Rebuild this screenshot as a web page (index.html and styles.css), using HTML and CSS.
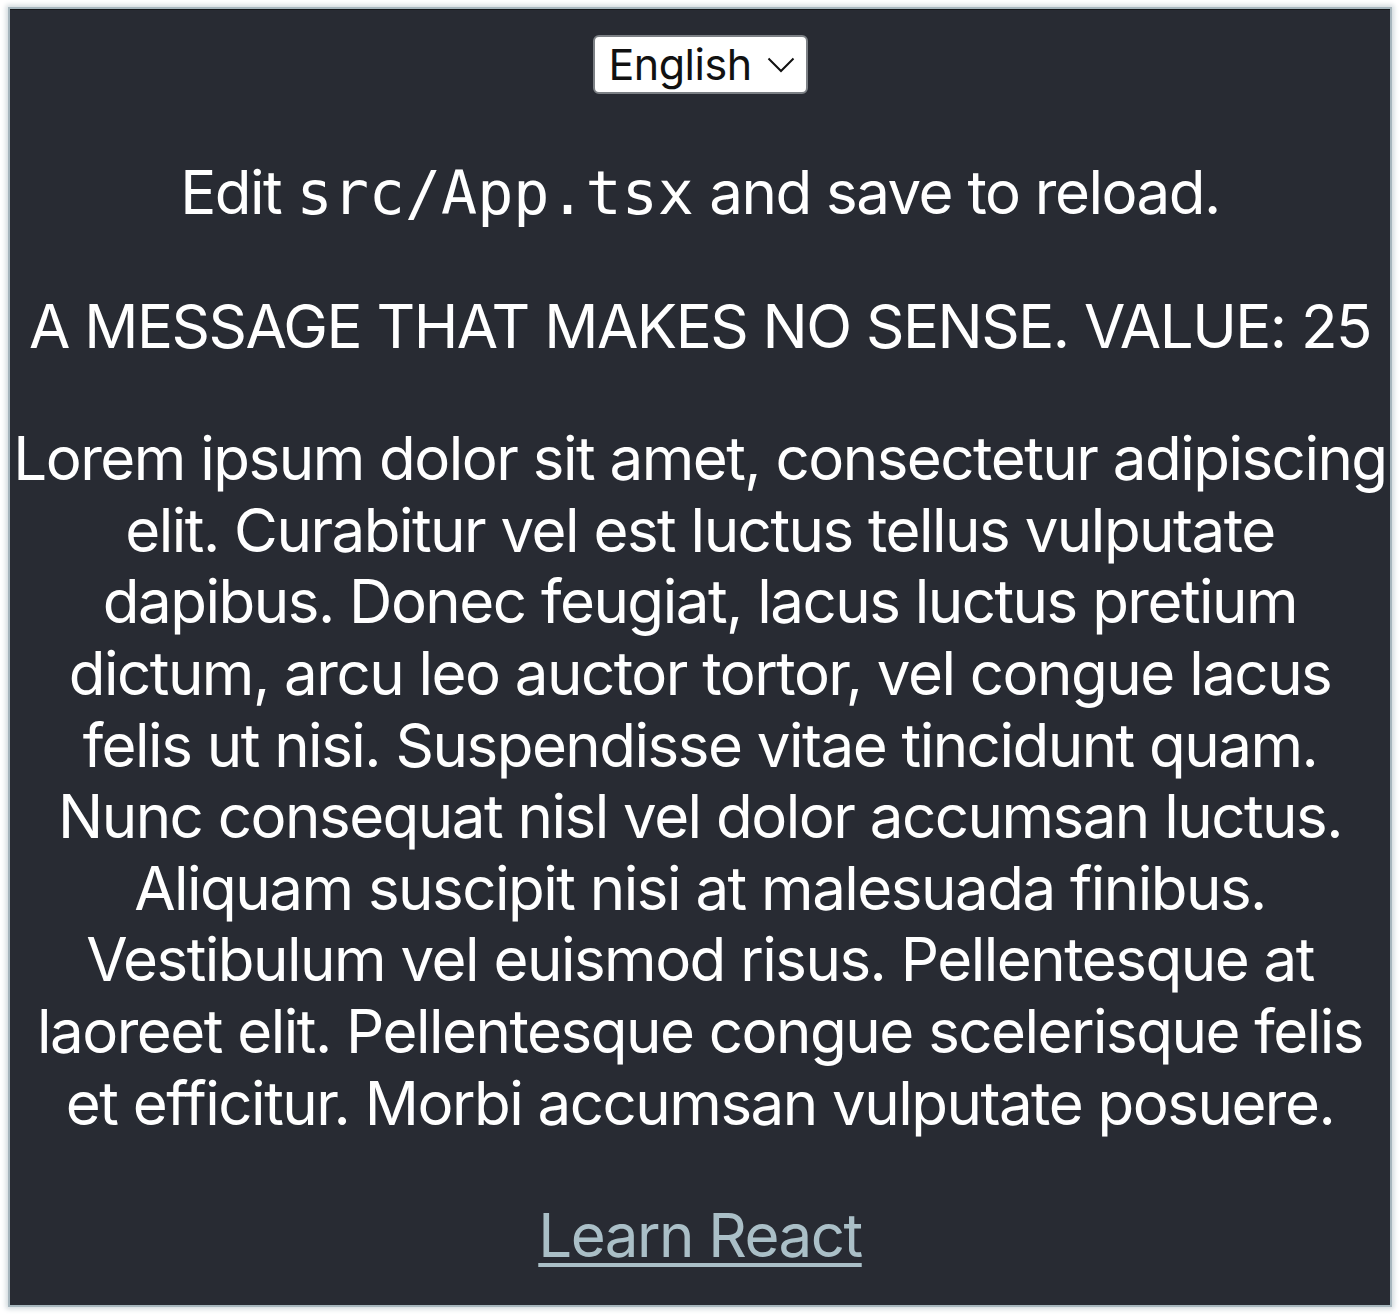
FILE: index.html
```html
<!DOCTYPE html>
<html lang="en">
<head>
<meta charset="utf-8">
<title>React App</title>
<link rel="stylesheet" href="styles.css">
</head>
<body>
<div class="frame">
  <header class="app-header">
    <div class="lang-select">
      <select class="lang" aria-label="Language">
        <option>English</option>
        <option>Français</option>
      </select>
      <svg class="chev" width="28" height="16" viewBox="0 0 28 16" aria-hidden="true"><path d="M1.5 1.5 L14 14 L26.5 1.5" fill="none" stroke="#111" stroke-width="2"/></svg>
    </div>
    <p class="line first">Edit <code>src/App.tsx</code> and save to reload.</p>
    <p class="line">A MESSAGE THAT MAKES NO SENSE. VALUE: 25</p>
    <p class="line">Lorem ipsum dolor sit amet, consectetur adipiscing elit. Curabitur vel est luctus tellus vulputate dapibus. Donec feugiat, lacus luctus pretium dictum, arcu leo auctor tortor, vel congue lacus felis ut nisi. Suspendisse vitae tincidunt quam. Nunc consequat nisl vel dolor accumsan luctus. Aliquam suscipit nisi at malesuada finibus. Vestibulum vel euismod risus. Pellentesque at laoreet elit. Pellentesque congue scelerisque felis et efficitur. Morbi accumsan vulputate posuere.</p>
    <a class="app-link" href="#">Learn React</a>
  </header>
</div>
</body>
</html>
```

FILE: styles.css
```css
html, body {
  margin: 0;
  padding: 0;
  background: #ffffff;
}
body {
  padding: 9px 10px;
  font-family: Inter, "Noto Sans", sans-serif;
}
.frame {
  width: 1380px;
  height: 1296px;
  background: #282b33;
  border-top: 1px solid #15171b;
  box-sizing: border-box;
  box-shadow: 0 0 0 2px #a6b6bd, 0 0 5px 4px #d0d9dc;
  overflow: hidden;
}
.app-header {
  display: flex;
  flex-direction: column;
  align-items: center;
  padding-top: 25px;
  color: #ffffff;
  font-size: 60px;
  line-height: 71.6px;
  letter-spacing: -1.5px;
  text-align: center;
}
.lang-select {
  position: relative;
  width: 215px;
  height: 59px;
  letter-spacing: 0;
}
.lang {
  display: block;
  appearance: none;
  -webkit-appearance: none;
  width: 215px;
  height: 59px;
  box-sizing: border-box;
  border: 2px solid #7c8085;
  border-radius: 6px;
  background: #ffffff;
  color: #111111;
  font-family: Inter, "Noto Sans", sans-serif;
  font-size: 43px;
  letter-spacing: -0.5px;
  padding: 0 0 0 14px;
  margin: 0;
  line-height: 55px;
}
.chev {
  position: absolute;
  right: 13px;
  top: 22px;
  pointer-events: none;
}
.line {
  margin: 61px 0 0 0;
}
.line.first {
  margin-top: 63px;
}
.line code {
  font-family: "DejaVu Sans Mono", monospace;
  font-size: 60px;
  letter-spacing: 0;
}
.app-link {
  margin-top: 61px;
  color: #aabfc7;
  text-decoration: underline;
  text-decoration-thickness: 4px;
  text-underline-offset: 6px;
}
```
